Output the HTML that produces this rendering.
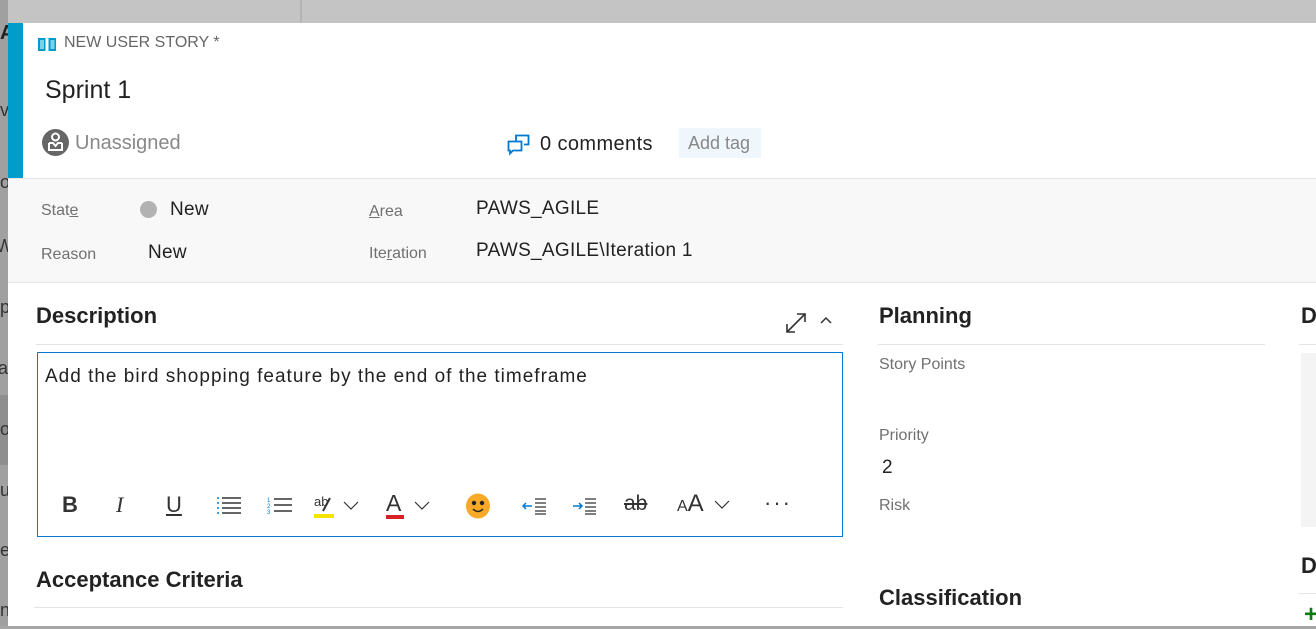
<!DOCTYPE html>
<html><head><style>
*{margin:0;padding:0;box-sizing:border-box}
body{width:1316px;height:626px;overflow:hidden;background:#a6a6a6;font-family:"Liberation Sans",sans-serif;position:relative;color:#222}
.a{position:absolute;white-space:nowrap}
.lbl{color:#707070;font-size:16px}
.val{color:#222;font-size:19px;letter-spacing:0.3px}
.h{font-size:22px;color:#222;font-weight:600}
.line{position:absolute;height:1px;background:#e4e4e4}
</style></head><body>
<div class="a" style="left:0;top:0;width:1316px;height:23px;background:#c4c4c4"></div>
<div class="a" style="top:0;width:2px;height:23px;background:#b4b4b4;left:300px"></div>
<div class="a" style="left:0;top:0;width:8px;height:626px;background:#a0a0a0"></div>
<div class="a" style="left:0;top:395px;width:8px;height:70px;background:#8e8e8e"></div>
<div class="a" style="left:0;top:22px;font-size:20px;font-weight:bold;color:#222">A</div>
<div class="a" style="left:0;top:100px;font-size:18px;color:#333">v</div>
<div class="a" style="left:0;top:172px;font-size:18px;color:#333">o</div>
<div class="a" style="left:-4px;top:236px;font-size:18px;color:#333">W</div>
<div class="a" style="left:0;top:297px;font-size:18px;color:#333">p</div>
<div class="a" style="left:-2px;top:358px;font-size:18px;color:#333">a</div>
<div class="a" style="left:0;top:419px;font-size:18px;color:#333">o</div>
<div class="a" style="left:0;top:480px;font-size:18px;color:#333">u</div>
<div class="a" style="left:0;top:540px;font-size:18px;color:#333">e</div>
<div class="a" style="left:0;top:600px;font-size:18px;color:#333">n</div>

<div class="a" style="left:8px;top:23px;width:1308px;height:603px;background:#fff"></div>
<div class="a" style="left:8px;top:23px;width:15px;height:155px;background:#009ccc"></div>
<svg class="a" style="left:37px;top:36px" width="20" height="16" viewBox="0 0 20 16"><path d="M1 2h7.5v13H1zM11.5 2H19v13h-7.5z" fill="#009ccc"/><path d="M3 4h4v9H3zM13.5 4h4v9h-4z" fill="#7cd0ea"/></svg>
<div class="a" style="left:64px;top:34px;font-size:16px;color:#666">NEW USER STORY *</div>
<div class="a" style="left:45px;top:76px;font-size:25px;color:#222">Sprint 1</div>
<svg class="a" style="left:42px;top:129px" width="27" height="27" viewBox="0 0 27 27"><circle cx="13.5" cy="13.5" r="13.5" fill="#666"/><circle cx="13.5" cy="8" r="3.5" fill="none" stroke="#fff" stroke-width="2"/><path d="M7 14v7h13v-7M7 14h4l2.5 3 2.5-3h4" fill="none" stroke="#fff" stroke-width="2"/></svg>
<div class="a" style="left:75px;top:132px;font-size:20px;color:#888">Unassigned</div>
<svg class="a" style="left:507px;top:134px" width="23" height="22" viewBox="0 0 23 22"><path d="M9 7V1.5h12.5v9H17" fill="none" stroke="#0078d4" stroke-width="1.8"/><path d="M1.5 7.5h13v9H6l-3 3v-3H1.5z" fill="#fff" stroke="#0078d4" stroke-width="1.8"/></svg>
<div class="a" style="left:540px;top:133px;font-size:20px;color:#222;letter-spacing:0.4px">0 comments</div>
<div class="a" style="left:679px;top:128px;width:82px;height:30px;background:#eff6fc"></div>
<div class="a" style="left:688px;top:133px;font-size:18px;color:#888">Add tag</div>

<div class="a" style="left:8px;top:178px;width:1308px;height:105px;background:#f8f8f8;border-top:1px solid #e4e4e4;border-bottom:1px solid #e4e4e4"></div>
<div class="a lbl" style="left:41px;top:202px">Stat<u>e</u></div>
<div class="a" style="left:140px;top:201px;width:17px;height:17px;border-radius:50%;background:#b2b2b2"></div>
<div class="a val" style="left:170px;top:199px">New</div>
<div class="a lbl" style="left:41px;top:246px">Reason</div>
<div class="a val" style="left:148px;top:242px">New</div>
<div class="a lbl" style="left:369px;top:203px"><u>A</u>rea</div>
<div class="a val" style="left:476px;top:198px">PAWS_AGILE</div>
<div class="a lbl" style="left:369px;top:245px">Ite<u>r</u>ation</div>
<div class="a val" style="left:476px;top:240px">PAWS_AGILE\Iteration 1</div>

<div class="a h" style="left:36px;top:303px">Description</div>
<svg class="a" style="left:785px;top:312px" width="22" height="22" viewBox="0 0 22 22"><path d="M2 20L20 2M12 2h8v8M2 12v8h8" fill="none" stroke="#333" stroke-width="1.6"/></svg>
<svg class="a" style="left:820px;top:316px" width="12" height="8" viewBox="0 0 12 8"><path d="M1 7l5-5 5 5" fill="none" stroke="#333" stroke-width="1.5"/></svg>
<div class="line" style="left:36px;top:344px;width:807px"></div>
<div class="a" style="left:37px;top:352px;width:806px;height:185px;border:1px solid #0078d4"></div>
<div class="a" style="left:45px;top:366px;font-size:19px;color:#222;letter-spacing:1px">Add the bird shopping feature by the end of the timeframe</div>
<div class="a" style="left:62px;top:492px;font-size:22px;font-weight:bold;color:#333">B</div>
<div class="a" style="left:116px;top:492px;font-size:22px;font-style:italic;color:#333;font-family:'Liberation Serif',serif">I</div>
<div class="a" style="left:166px;top:492px;font-size:22px;color:#333;text-decoration:underline">U</div>
<svg class="a" style="left:216px;top:496px" width="26" height="18" viewBox="0 0 26 18"><path d="M6 2h19M6 7h19M6 12h19M6 17h19" stroke="#333" stroke-width="1.5"/><path d="M1 2h2M1 7h2M1 12h2M1 17h2" stroke="#0078d4" stroke-width="1.5"/></svg>
<svg class="a" style="left:267px;top:496px" width="26" height="18" viewBox="0 0 26 18"><path d="M7 3h18M7 9h18M7 15h18" stroke="#333" stroke-width="1.5"/><text x="0" y="6" font-size="6" fill="#0078d4">1</text><text x="0" y="12" font-size="6" fill="#0078d4">2</text><text x="0" y="18" font-size="6" fill="#0078d4">3</text></svg>
<div class="a" style="left:314px;top:494px;font-size:13px;color:#333">ab</div>
<svg class="a" style="left:314px;top:494px" width="50" height="24" viewBox="0 0 50 24"><path d="M16 4l-7 13" stroke="#333" stroke-width="2"/><rect x="0" y="20" width="20" height="4" fill="#f5e400"/><path d="M30 8l7 7 7-7" fill="none" stroke="#333" stroke-width="1.2"/></svg>
<div class="a" style="left:386px;top:490px;font-size:23px;color:#333">A</div>
<svg class="a" style="left:385px;top:500px" width="50" height="20" viewBox="0 0 50 20"><rect x="1" y="15" width="18" height="4" fill="#d92027"/><path d="M30 2l7 7 7-7" fill="none" stroke="#333" stroke-width="1.2"/></svg>
<svg class="a" style="left:465px;top:493px" width="26" height="26" viewBox="0 0 26 26"><ellipse cx="13" cy="13" rx="12" ry="12.5" fill="#f8a928"/><circle cx="9" cy="10" r="2.2" fill="#222"/><circle cx="17" cy="10" r="2.2" fill="#222"/><path d="M8 16q5 5 10 0" fill="none" stroke="#222" stroke-width="1.5"/></svg>
<svg class="a" style="left:522px;top:497px" width="26" height="18" viewBox="0 0 26 18"><path d="M1 9h9M4 6l-3 3 3 3" fill="none" stroke="#0078d4" stroke-width="1.5"/><path d="M13 2h11M13 6h11M13 10h11M13 14h11M13 17h11" stroke="#333" stroke-width="1.3"/></svg>
<svg class="a" style="left:572px;top:497px" width="26" height="18" viewBox="0 0 26 18"><path d="M1 9h9M7 6l3 3-3 3" fill="none" stroke="#0078d4" stroke-width="1.5"/><path d="M13 2h11M13 6h11M13 10h11M13 14h11M13 17h11" stroke="#333" stroke-width="1.3"/></svg>
<div class="a" style="left:624px;top:492px;font-size:21px;color:#333;text-decoration:line-through">ab</div>
<div class="a" style="left:677px;top:490px;color:#333"><span style="font-size:16px">A</span><span style="font-size:24px">A</span></div>
<svg class="a" style="left:712px;top:499px" width="20" height="12" viewBox="0 0 20 12"><path d="M3 2l7 7 7-7" fill="none" stroke="#333" stroke-width="1.2"/></svg>
<div class="a" style="left:764px;top:490px;font-size:22px;color:#333;letter-spacing:2px">···</div>

<div class="a h" style="left:36px;top:567px">Acceptance Criteria</div>
<div class="line" style="left:34px;top:607px;width:809px"></div>

<div class="a h" style="left:879px;top:303px">Planning</div>
<div class="line" style="left:878px;top:344px;width:387px"></div>
<div class="a lbl" style="left:879px;top:356px">Story Points</div>
<div class="a lbl" style="left:879px;top:427px">Priority</div>
<div class="a val" style="left:882px;top:457px">2</div>
<div class="a lbl" style="left:879px;top:497px">Risk</div>
<div class="a h" style="left:879px;top:585px">Classification</div>

<div class="a h" style="left:1301px;top:303px">D</div>
<div class="line" style="left:1299px;top:344px;width:17px"></div>
<div class="a" style="left:1301px;top:353px;width:15px;height:174px;background:#f4f4f4"></div>
<div class="a h" style="left:1301px;top:553px">D</div>
<div class="line" style="left:1299px;top:593px;width:17px"></div>
<div class="a" style="left:1304px;top:601px;font-size:24px;color:#107c10;font-weight:bold">+</div>
</body></html>
